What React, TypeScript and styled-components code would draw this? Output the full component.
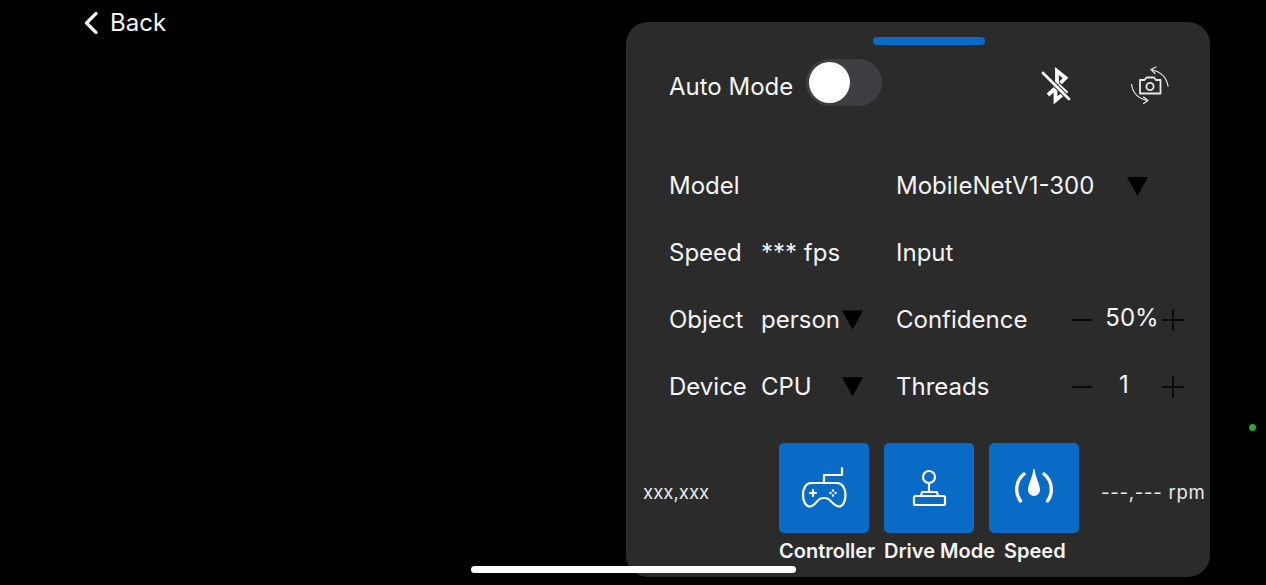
import React from "react";
import styled, { createGlobalStyle } from "styled-components";

const Global = createGlobalStyle`
  html, body { margin: 0; padding: 0; background: #000; }
  body { font-family: Inter, "Noto Sans", "Liberation Sans", sans-serif; }
`;

const Page = styled.div`
  position: relative;
  width: 1266px;
  height: 585px;
  overflow: hidden;
  background: #000;
  display: grid;
  grid-template-columns: 626px 584px;
  color: #f4f4f5;
`;

const Side = styled.div`
  padding: 8px 0 0 84px;
`;

const BackLink = styled.div`
  display: flex;
  align-items: center;
  gap: 12px;
  height: 30px;
  font-size: 24px;
  line-height: 30px;
`;

const Panel = styled.section`
  margin-top: 22px;
  height: 555px;
  box-sizing: border-box;
  background: #2b2b2b;
  border-radius: 22px;
  padding-top: 15px;
  display: flex;
  flex-direction: column;
`;

const Handle = styled.div`
  width: 112px;
  height: 8px;
  border-radius: 4px;
  background: #0a6ac8;
  margin: 0 0 14px 247px;
`;

const Header = styled.div`
  display: flex;
  align-items: center;
  height: 47px;
  padding-left: 43px;
`;

const Label = styled.span`
  font-size: 24px;
  line-height: 32px;
  white-space: nowrap;
`;

const HeaderLabel = styled(Label)`
  padding-top: 8px;
`;

const Toggle = styled.div`
  width: 76px;
  height: 47px;
  margin-left: 13px;
  border-radius: 24px;
  background: #3f3f43;
  display: flex;
  align-items: center;
  padding-left: 3px;
  box-sizing: border-box;
`;

const Knob = styled.div`
  width: 41px;
  height: 41px;
  border-radius: 50%;
  background: #fff;
`;

const HeaderIcons = styled.div`
  display: flex;
  align-items: center;
  margin-left: 154px;
  padding-top: 7px;
  gap: 52px;
`;

const Settings = styled.div`
  margin-top: 47px;
  padding-left: 43px;
  display: grid;
  grid-template-columns: 92px 135px 176px 112px;
  grid-auto-rows: 66.75px;
  align-items: center;
`;

const Picker = styled.div<{ $width: number; $span?: number }>`
  display: flex;
  align-items: center;
  justify-content: space-between;
  width: ${(p) => p.$width}px;
  grid-column: span ${(p) => p.$span ?? 1};
`;

const Caret = styled.span`
  width: 21px;
  height: 19px;
  background: #000;
  clip-path: polygon(0 0, 100% 0, 50% 100%);
  flex: none;
`;

const Stepper = styled.div`
  display: grid;
  grid-template-columns: 20px 1fr 22px;
  align-items: center;
`;

const StepValue = styled.span<{ $shift: number }>`
  font-size: 24px;
  line-height: 32px;
  text-align: center;
  transform: translate(${(p) => p.$shift}px, -2px);
`;

const Minus = styled.span`
  height: 2px;
  background: #0c0c0c;
`;

const Plus = styled.span`
  position: relative;
  height: 22px;
  &::before, &::after {
    content: "";
    position: absolute;
    background: #0c0c0c;
  }
  &::before { left: 0; right: 0; top: 10px; height: 2px; }
  &::after { top: 0; bottom: 0; left: 10px; width: 2px; }
`;

const Footer = styled.div`
  margin-top: 23px;
  padding-left: 17px;
  display: flex;
  align-items: flex-start;
`;

const Readout = styled.span<{ $width: number; $spacing?: number }>`
  width: ${(p) => p.$width}px;
  font-size: 18.6px;
  line-height: 98px;
  letter-spacing: ${(p) => p.$spacing ?? 0}px;
  white-space: nowrap;
  color: #e8e8ea;
`;

const Action = styled.div`
  width: 90px;
  margin-right: 15px;
  &:last-of-type { margin-right: 22px; }
`;

const ActionButton = styled.div`
  width: 90px;
  height: 90px;
  border-radius: 5px;
  background: #0a6bc6;
  display: flex;
`;

const ActionLabel = styled.div<{ $inset?: number }>`
  margin-top: 6px;
  padding-left: ${(p) => p.$inset ?? 0}px;
  font-size: 20px;
  line-height: 24px;
  font-weight: 600;
  white-space: nowrap;
`;

const HomeBar = styled.div`
  position: absolute;
  left: 471px;
  top: 566px;
  width: 325px;
  height: 7px;
  border-radius: 4px;
  background: #fff;
`;

const Dot = styled.div`
  position: absolute;
  left: 1249px;
  top: 424px;
  width: 7px;
  height: 7px;
  border-radius: 50%;
  background: #2aa745;
`;

const Chevron = () => (
  <svg width="14" height="22" viewBox="0 0 14 22" fill="none" stroke="#f4f4f5" strokeWidth="3.2" strokeLinecap="round" strokeLinejoin="round">
    <path d="M12 1.5 L2.5 11 L12 20.5" />
  </svg>
);

const BluetoothOff = () => (
  <svg width="40" height="40" viewBox="0 0 40 40" fill="none" stroke="#fff" strokeWidth="3.8" strokeLinejoin="miter">
    <path d="M21 18 V5 L29.5 12 L24.5 17" />
    <path d="M12 29 L19.5 22 V34.5 L29.5 26 L22 19" />
    <path d="M7 7 L33 33" stroke="#2b2b2b" strokeWidth="4.6" />
    <path d="M7 7 L33 33" strokeWidth="2.8" strokeLinecap="round" />
  </svg>
);

const CameraRotate = () => (
  <svg width="44" height="44" viewBox="0 0 44 44" fill="none" stroke="#e8e8ea" strokeLinecap="round" strokeLinejoin="round">
    <path d="M12 16 H16.5 L18.5 13.5 H26 L28 16 H32.5 V29.5 H12 Z" strokeWidth="1.8" />
    <circle cx="22" cy="22.5" r="3.6" strokeWidth="1.8" />
    <path d="M40 22 C38.5 13 32 7.5 23 5.5 M23 5.5 L28 3 M23 5.5 L27 9.5" strokeWidth="1.2" />
    <path d="M3.5 20.5 C5 29.5 11.5 35 20 36.5 M20 36.5 L15.5 33 M20 36.5 L15.5 39.5" strokeWidth="1.2" />
  </svg>
);

const ControllerIcon = () => (
  <svg width="90" height="90" viewBox="0 0 90 90" fill="none" stroke="#fff" strokeWidth="2.2" strokeLinejoin="round" strokeLinecap="round">
    <path d="M45 40 V32 H63 V25" />
    <path d="M32 40 H58 C63 40 66.5 45 66.5 52 C66.5 59 63.5 63.5 60 63.5 C56 63.5 53 59 50 56.5 C48 54.5 42 54.5 40 56.5 C37 59 34.5 63.5 31 63.5 C27 63.5 24 59 24 52 C24 45 27 40 32 40 Z" />
    <path d="M31 50 H37 M34 47 V53" />
    <g strokeWidth="1.4">
      <circle cx="54" cy="47.5" r="0.5" />
      <circle cx="54" cy="52.5" r="0.5" />
      <circle cx="51.5" cy="50" r="0.5" />
      <circle cx="56.5" cy="50" r="0.5" />
    </g>
  </svg>
);

const JoystickIcon = () => (
  <svg width="90" height="90" viewBox="0 0 90 90" fill="none" stroke="#fff" strokeWidth="2.2" strokeLinejoin="round">
    <circle cx="45" cy="34" r="6" />
    <path d="M45 40 V49" />
    <path d="M37 53 L38 49 H53 L54 53" />
    <rect x="30" y="53" width="31" height="9" rx="1.5" />
  </svg>
);

const SpeedIcon = () => (
  <svg width="90" height="90" viewBox="0 0 90 90" fill="none" stroke="#fff" strokeWidth="3.4" strokeLinecap="round">
    <path d="M35 31 C26.5 38 25.5 50 31.5 58" />
    <path d="M55 31 C63.5 38 64.5 50 58.5 58" />
    <path d="M44.4 26 H45.6 C46.5 35 51 41 51 47 A6 6 0 0 1 39 47 C39 41 43.5 35 44.4 26 Z" fill="#fff" stroke="none" />
  </svg>
);

export default function App() {
  return (
    <Page>
      <Global />
      <Side>
        <BackLink>
          <Chevron />
          Back
        </BackLink>
      </Side>
      <Panel>
        <Handle />
        <Header>
          <HeaderLabel>Auto Mode</HeaderLabel>
          <Toggle>
            <Knob />
          </Toggle>
          <HeaderIcons>
            <BluetoothOff />
            <CameraRotate />
          </HeaderIcons>
        </Header>
        <Settings>
          <Label>Model</Label>
          <span />
          <Picker $width={252} $span={2}>
            <Label>MobileNetV1-300</Label>
            <Caret />
          </Picker>

          <Label>Speed</Label>
          <Label>*** fps</Label>
          <Label>Input</Label>
          <span />

          <Label>Object</Label>
          <Picker $width={102}>
            <Label>person</Label>
            <Caret />
          </Picker>
          <Label>Confidence</Label>
          <Stepper>
            <Minus />
            <StepValue $shift={5}>50%</StepValue>
            <Plus />
          </Stepper>

          <Label>Device</Label>
          <Picker $width={102}>
            <Label>CPU</Label>
            <Caret />
          </Picker>
          <Label>Threads</Label>
          <Stepper>
            <Minus />
            <StepValue $shift={-3}>1</StepValue>
            <Plus />
          </Stepper>
        </Settings>
        <Footer>
          <Readout $width={136}>xxx,xxx</Readout>
          <Action>
            <ActionButton>
              <ControllerIcon />
            </ActionButton>
            <ActionLabel>Controller</ActionLabel>
          </Action>
          <Action>
            <ActionButton>
              <JoystickIcon />
            </ActionButton>
            <ActionLabel>Drive Mode</ActionLabel>
          </Action>
          <Action>
            <ActionButton>
              <SpeedIcon />
            </ActionButton>
            <ActionLabel $inset={15}>Speed</ActionLabel>
          </Action>
          <Readout $width={104} $spacing={0.7}>---,--- rpm</Readout>
        </Footer>
      </Panel>
      <Dot />
      <HomeBar />
    </Page>
  );
}
